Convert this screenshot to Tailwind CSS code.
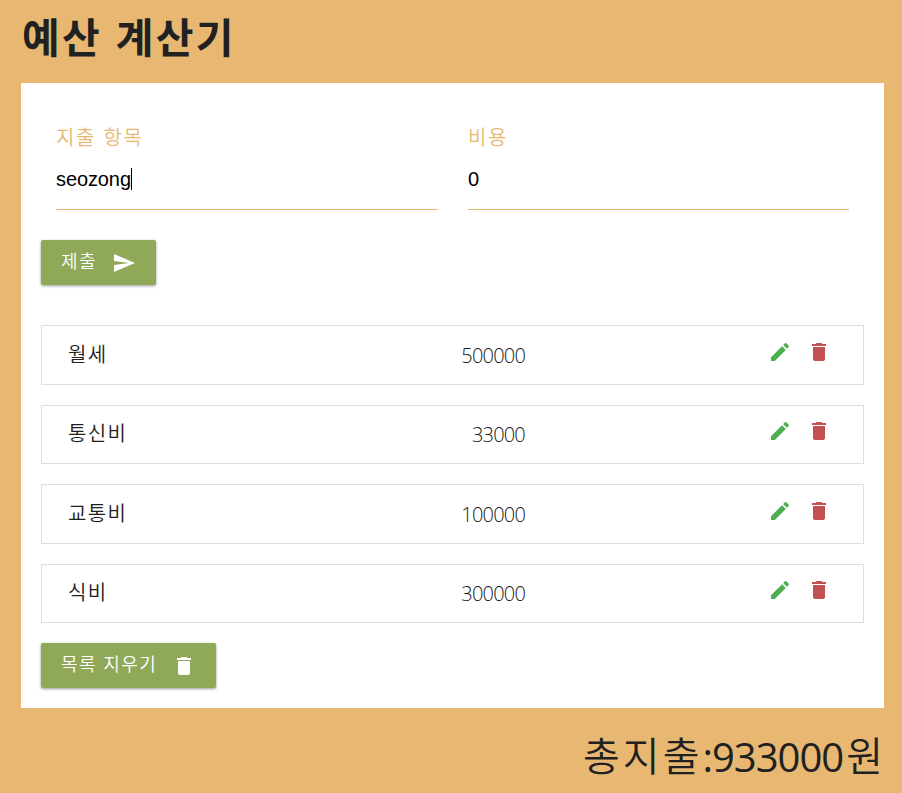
<!DOCTYPE html>
<html lang="ko">
<head>
<meta charset="utf-8">
<title>예산 계산기</title>
<script src="https://cdn.jsdelivr.net/npm/@tailwindcss/browser@4"></script>
</head>
<body class="h-[793px] overflow-hidden bg-[#e8b873] px-[21px] pr-[18px] font-['Noto_Sans_CJK_KR',sans-serif] text-[#212121]">
<svg class="hidden">
  <symbol id="send" viewBox="0 0 24 24"><path d="M2.01 21L23 12 2.01 3 2 10l15 2-15 2z"/></symbol>
  <symbol id="edit" viewBox="0 0 24 24"><path d="M3 17.25V21h3.75L17.81 9.94l-3.75-3.75L3 17.25zM20.71 7.04a.996.996 0 0 0 0-1.41l-2.34-2.34a.996.996 0 0 0-1.41 0l-1.83 1.83 3.75 3.75 1.83-1.83z"/></symbol>
  <symbol id="trash" viewBox="0 0 24 24"><path d="M6 19c0 1.100.900 2 2 2h8c1.100 0 2-.900 2-2V7H6v12zM19 4h-3.500l-1-1h-5l-1 1H5v2h14V4z"/></symbol>
</svg>
<h1 class="flex h-[83px] items-start pt-[5px] pl-px text-[41px] leading-[60px] font-bold tracking-[2.300px] whitespace-nowrap">예산 계산기</h1>
<main class="h-[625px] bg-white px-5 pt-[38px]">
  <form>
    <div class="flex gap-[30px] px-[15px]">
      <label class="h-[89px] w-[382px] border-b border-[#e8b873]">
        <span class="block h-8 text-[20px] leading-[32px] font-[350] tracking-[1.700px] text-[#e8b873]">지출 항목</span>
        <span class="flex h-[52px] items-center font-['Liberation_Sans',sans-serif] text-[20px] tracking-[-0.100px] text-black">seozong<i class="h-[22px] w-px bg-black"></i></span>
      </label>
      <label class="h-[89px] w-[381px] border-b border-[#e8b873]">
        <span class="block h-8 text-[20px] leading-[32px] font-[350] tracking-[1.700px] text-[#e8b873]">비용</span>
        <span class="flex h-[52px] items-center font-['Liberation_Sans',sans-serif] text-[20px] text-black">0</span>
      </label>
    </div>
    <button type="button" class="mt-[30px] flex h-[45px] w-[115px] rounded-[2px] bg-[#90a959] pl-5 text-white shadow-[0_1px_3px_rgba(0,0,0,0.4)]">
      <span class="w-[51px] text-left text-[18px] leading-[40px] font-[350] tracking-[1.500px]">제출</span>
      <svg class="mt-[11px] size-6 fill-current"><use href="#send"/></svg>
    </button>
  </form>
  <ul class="mt-10">
    <li class="mb-5 flex h-[59.5px] border border-[#dedede] pl-[26px]">
      <span class="w-[350px] text-[20px] leading-[56px] font-[350] tracking-[1.400px]">월세</span>
      <span class="w-[107px] text-right font-['Open_Sans',sans-serif] text-[20px] leading-[60px] font-light tracking-[-0.800px]">500000</span>
      <span class="ml-[243px] flex gap-[15px] pt-[13.6px]"><svg class="size-6 fill-[#4caf50]"><use href="#edit"/></svg><svg class="size-6 fill-[#c25050]"><use href="#trash"/></svg></span>
    </li>
    <li class="mb-5 flex h-[59.5px] border border-[#dedede] pl-[26px]">
      <span class="w-[350px] text-[20px] leading-[54px] font-[350] tracking-[1.400px]">통신비</span>
      <span class="w-[107px] text-right font-['Open_Sans',sans-serif] text-[20px] leading-[58px] font-light tracking-[-0.800px]">33000</span>
      <span class="ml-[243px] flex gap-[15px] pt-[13.6px]"><svg class="size-6 fill-[#4caf50]"><use href="#edit"/></svg><svg class="size-6 fill-[#c25050]"><use href="#trash"/></svg></span>
    </li>
    <li class="mb-5 flex h-[59.5px] border border-[#dedede] pl-[26px]">
      <span class="w-[350px] text-[20px] leading-[56px] font-[350] tracking-[1.400px]">교통비</span>
      <span class="w-[107px] text-right font-['Open_Sans',sans-serif] text-[20px] leading-[60px] font-light tracking-[-0.800px]">100000</span>
      <span class="ml-[243px] flex gap-[15px] pt-[13.6px]"><svg class="size-6 fill-[#4caf50]"><use href="#edit"/></svg><svg class="size-6 fill-[#c25050]"><use href="#trash"/></svg></span>
    </li>
    <li class="mb-5 flex h-[59.5px] border border-[#dedede] pl-[26px]">
      <span class="w-[350px] text-[20px] leading-[54px] font-[350] tracking-[1.400px]">식비</span>
      <span class="w-[107px] text-right font-['Open_Sans',sans-serif] text-[20px] leading-[58px] font-light tracking-[-0.800px]">300000</span>
      <span class="ml-[243px] flex gap-[15px] pt-[13.6px]"><svg class="size-6 fill-[#4caf50]"><use href="#edit"/></svg><svg class="size-6 fill-[#c25050]"><use href="#trash"/></svg></span>
    </li>
  </ul>
  <button type="button" class="flex h-[45px] w-[175px] rounded-[2px] bg-[#90a959] pl-5 text-white shadow-[0_1px_3px_rgba(0,0,0,0.4)]">
    <span class="w-[111px] text-left text-[18px] leading-[40px] font-[350] tracking-[1.400px] whitespace-nowrap">목록 지우기</span>
    <svg class="mt-[11px] size-6 fill-current"><use href="#trash"/></svg>
  </button>
</main>
<div class="flex justify-end pt-[16px] pr-px text-[40px] leading-[60px] font-[350] whitespace-nowrap"><span class="tracking-[3px]">총지출</span><span class="mr-[3px] font-['Open_Sans',sans-serif] text-[40px] leading-[65px] font-normal tracking-[-1px]">:933000</span><span>원</span></div>
</body>
</html>
